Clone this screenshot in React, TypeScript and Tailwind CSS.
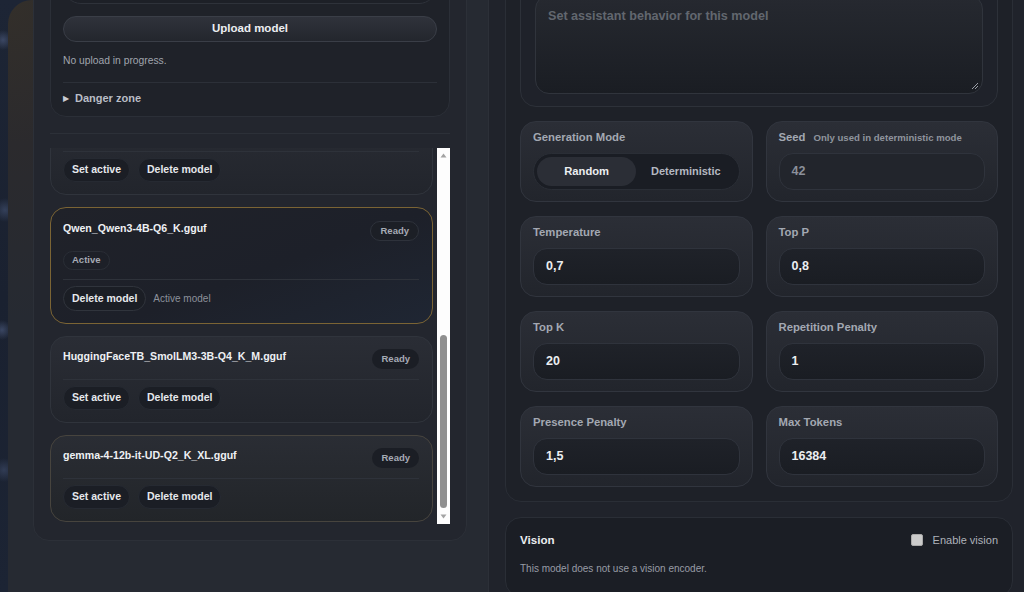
import React from "react";

const font = "font-['Liberation_Sans',Arial,sans-serif]";

function Pill({ children, tone = "dark" }: { children: React.ReactNode; tone?: "dark" | "outline" }) {
  return (
    <span
      className={
        "inline-flex h-[20px] items-center rounded-full px-[9px] text-[9.5px] font-bold text-[#a6abb5] " +
        (tone === "outline" ? "border border-[#2e323b] bg-[#1c1f26]" : "bg-[#1b1e25]")
      }
    >
      {children}
    </span>
  );
}

function SmallButton({ children }: { children: React.ReactNode }) {
  return (
    <button className="h-[24px] rounded-full border border-[#262a32] bg-[#1b1e25] px-[8px] text-[10.5px] font-bold text-[#e6e8ec]">
      {children}
    </button>
  );
}

type ModelCardProps = {
  name?: string;
  active?: boolean;
  variant?: "plain" | "warm";
};

function ModelCard({ name, active, variant = "plain" }: ModelCardProps) {
  const shell = active
    ? "border-[#7b6434] bg-[linear-gradient(160deg,#202229_0%,#1d2029_55%,#1f2633_100%)]"
    : variant === "warm"
      ? "border-[#47443e] bg-[linear-gradient(180deg,#2a2d34_0%,#222529_100%)]"
      : "border-[#30343c] bg-[linear-gradient(180deg,#2a2d35_0%,#22252c_100%)]";
  return (
    <div className={"rounded-[16px] border pl-[12px] pr-[13px] pb-[12px] " + shell + (active ? " pt-[13px]" : " pt-[12px]")}>
      {/* header row; left empty for the entry scrolled above the list */}
      <div className="flex h-[20px] items-start justify-between">
        {name ? (
          <>
            <span className="text-[10.6px] font-bold leading-[14px] text-[#eef0f3]">{name}</span>
            <Pill tone={active ? "outline" : "dark"}>Ready</Pill>
          </>
        ) : null}
      </div>
      {active && (
        <div className="mt-[10px] flex">
          <span className="inline-flex h-[19px] items-center rounded-full border border-[#2a2e36] bg-[#1d2028] px-[8px] text-[9.5px] font-bold text-[#a6abb5]">
            Active
          </span>
        </div>
      )}
      <div className={"border-t border-[#2e323a] pt-[6px] " + (active ? "mt-[9px]" : "mt-[10px]")}>
        {active ? (
          <div className="flex items-center gap-[7px]">
            <button className="h-[25px] rounded-full border border-[#30343c] bg-[#1b1e25] px-[8px] text-[10.5px] font-bold text-[#e6e8ec]">
              Delete model
            </button>
            <span className="text-[10px] text-[#8c919b]">Active model</span>
          </div>
        ) : (
          <div className="flex items-center gap-[8px]">
            <SmallButton>Set active</SmallButton>
            <SmallButton>Delete model</SmallButton>
          </div>
        )}
      </div>
    </div>
  );
}

function ScrollBar() {
  return (
    <div className="relative ml-[4px] w-[13px] shrink-0 bg-[#fdfdfd]">
      <svg className="absolute left-[3px] top-[5px]" width="7" height="5" viewBox="0 0 7 5">
        <path d="M3.5 0.5 L6.5 4.5 L0.5 4.5 Z" fill="#a3a3a3" />
      </svg>
      <div className="absolute left-[3px] top-[187px] h-[173px] w-[7px] rounded-full bg-[#8f8f8f]" />
      <svg className="absolute bottom-[5px] left-[3px]" width="7" height="5" viewBox="0 0 7 5">
        <path d="M0.5 0.5 L6.5 0.5 L3.5 4.5 Z" fill="#a3a3a3" />
      </svg>
    </div>
  );
}

function ParamCard({ label, children }: { label: React.ReactNode; children: React.ReactNode }) {
  return (
    <div className="h-[81px] rounded-[16px] border border-[#31353e] bg-[linear-gradient(180deg,#2b2e36_0%,#22252c_100%)] px-[12px] pt-[7px]">
      <div className="flex h-[16px] items-center">{label}</div>
      <div className="mt-[8px]">{children}</div>
    </div>
  );
}

function ValueInput({ value, muted }: { value: string; muted?: boolean }) {
  return (
    <div
      className={
        "flex h-[37px] items-center rounded-[14px] border border-[#2f333c] pl-[12px] text-[12.5px] font-bold " +
        (muted
          ? "bg-[#22252c] text-[#8b909a]"
          : "bg-[linear-gradient(180deg,#1f2229_0%,#1a1d23_100%)] text-[#eceef1]")
      }
    >
      {value}
    </div>
  );
}

const labelCls = "text-[11.3px] font-bold text-[#a3a8b2]";

export default function App() {
  return (
    <div
      className={
        "relative h-[592px] w-[1024px] overflow-hidden bg-[radial-gradient(circle_at_3px_40px,#3b4763_0px,transparent_10px),radial-gradient(circle_at_5px_210px,#34405a_0px,transparent_12px),radial-gradient(circle_at_2px_330px,#3a4662_0px,transparent_10px),radial-gradient(circle_at_4px_470px,#313c55_0px,transparent_12px),linear-gradient(180deg,#1d2535_0%,#1a2130_50%,#1c2434_100%)] " +
        font
      }
    >
      <div className="ml-[8px] h-full overflow-hidden rounded-tl-[24px] bg-[radial-gradient(circle_320px_at_0px_0px,#332f2a_0%,#2b2a2d_45%,#262a32_100%)] pl-[25px]">
        <div className="-mt-[73px] flex items-start gap-[21px]">
          {/* model library column */}
          <div className="mt-[11px] w-[434px] shrink-0 rounded-[16px] border border-[#2c3038] bg-[#23262e] p-[16px]">
            <div className="rounded-[16px] border border-[#2b2f37] bg-[#1f2229] px-[12px] pt-[12px] pb-[11px]">
              <div className="h-[36px] rounded-full border border-[#2e323a] bg-[#1d2027]" />
              <button className="mt-[12px] flex h-[26px] w-full items-center justify-center rounded-full border border-[#3a3e47] bg-[linear-gradient(180deg,#2f323b_0%,#23262d_100%)] text-[11.5px] font-bold text-[#eceef1]">
                Upload model
              </button>
              <p className="mt-[12px] h-[14px] text-[10.3px] leading-[14px] text-[#a0a5ae]">No upload in progress.</p>
              <div className="mt-[14px] border-t border-[#2c3038] pt-[9px]">
                <div className="flex h-[13px] items-center gap-[6px]">
                  <span className="text-[8px] text-[#c9ccd3]">▶</span>
                  <span className="text-[11px] font-bold text-[#b9bdc6]">Danger zone</span>
                </div>
              </div>
            </div>
            <div className="mt-[16px] border-t border-[#2c3038] pt-[14px]">
              <div className="flex h-[376px]">
                <div className="min-w-0 flex-1 overflow-hidden">
                  <div className="-mt-[40px] flex flex-col gap-[12px]">
                    <ModelCard />
                    <ModelCard name="Qwen_Qwen3-4B-Q6_K.gguf" active />
                    <ModelCard name="HuggingFaceTB_SmolLM3-3B-Q4_K_M.gguf" />
                    <ModelCard name="gemma-4-12b-it-UD-Q2_K_XL.gguf" variant="warm" />
                  </div>
                </div>
                <ScrollBar />
              </div>
            </div>
          </div>

          {/* settings column */}
          <div className="w-[542px] shrink-0 border-l border-[#2c3038] bg-[#20232b] pl-[16px] pt-[16px] pb-[40px]">
            <div className="w-[508px] rounded-[16px] border border-[#2a2e36] bg-[#1e2128] p-[14px]">
              <div className="rounded-[16px] border border-[#2d3139] bg-[#1f222a] px-[14px] pt-[12px] pb-[12px]">
                <div className="h-[16px]" />
                <div className="relative mt-[8px] h-[99px] rounded-[14px] border border-[#30343c] bg-[linear-gradient(180deg,#262930_0%,#1a1d23_100%)] px-[12px] pt-[7px]">
                  <span className="text-[12.6px] font-bold leading-[14px] text-[#62676f]">
                    Set assistant behavior for this model
                  </span>
                  <svg className="absolute bottom-[3px] right-[3px]" width="8" height="8" viewBox="0 0 8 8">
                    <path d="M7 1 L1 7 M7 4 L4 7" stroke="#9a9ea6" strokeWidth="1" />
                  </svg>
                </div>
              </div>

              <div className="mt-[14px] grid grid-cols-2 gap-x-[13px] gap-y-[14px]">
                <ParamCard label={<span className={labelCls}>Generation Mode</span>}>
                  <div className="flex h-[37px] rounded-full border border-[#2a2e36] bg-[#1a1d24] p-[3px]">
                    <div className="flex flex-1 items-center justify-center rounded-full bg-[#2b2e36] text-[11.2px] font-bold text-[#eceef1]">
                      Random
                    </div>
                    <div className="flex flex-1 items-center justify-center text-[11px] font-bold text-[#b4b8c1]">
                      Deterministic
                    </div>
                  </div>
                </ParamCard>
                <ParamCard
                  label={
                    <span className="flex items-baseline gap-[8px]">
                      <span className={labelCls}>Seed</span>
                      <span className="text-[9.6px] font-bold text-[#8f949d]">Only used in deterministic mode</span>
                    </span>
                  }
                >
                  <ValueInput value="42" muted />
                </ParamCard>
                <ParamCard label={<span className={labelCls}>Temperature</span>}>
                  <ValueInput value="0,7" />
                </ParamCard>
                <ParamCard label={<span className={labelCls}>Top P</span>}>
                  <ValueInput value="0,8" />
                </ParamCard>
                <ParamCard label={<span className={labelCls}>Top K</span>}>
                  <ValueInput value="20" />
                </ParamCard>
                <ParamCard label={<span className={labelCls}>Repetition Penalty</span>}>
                  <ValueInput value="1" />
                </ParamCard>
                <ParamCard label={<span className={labelCls}>Presence Penalty</span>}>
                  <ValueInput value="1,5" />
                </ParamCard>
                <ParamCard label={<span className={labelCls}>Max Tokens</span>}>
                  <ValueInput value="16384" />
                </ParamCard>
              </div>
            </div>

            <div className="mt-[15px] w-[508px] rounded-[16px] border border-[#2a2e36] bg-[#1b1e25] px-[14px] pt-[14px] pb-[20px]">
              <div className="flex h-[16px] items-center justify-between">
                <span className="text-[11.6px] font-bold text-[#eceef1]">Vision</span>
                <label className="flex items-center gap-[10px]">
                  <span className="h-[12px] w-[12px] rounded-[2px] border border-[#a9a9a9] bg-[#cbcbcb]" />
                  <span className="text-[11px] text-[#aeb2ba]">Enable vision</span>
                </label>
              </div>
              <p className="mt-[14px] text-[10px] leading-[14px] text-[#989ca5]">This model does not use a vision encoder.</p>
            </div>
          </div>
        </div>
      </div>
    </div>
  );
}
